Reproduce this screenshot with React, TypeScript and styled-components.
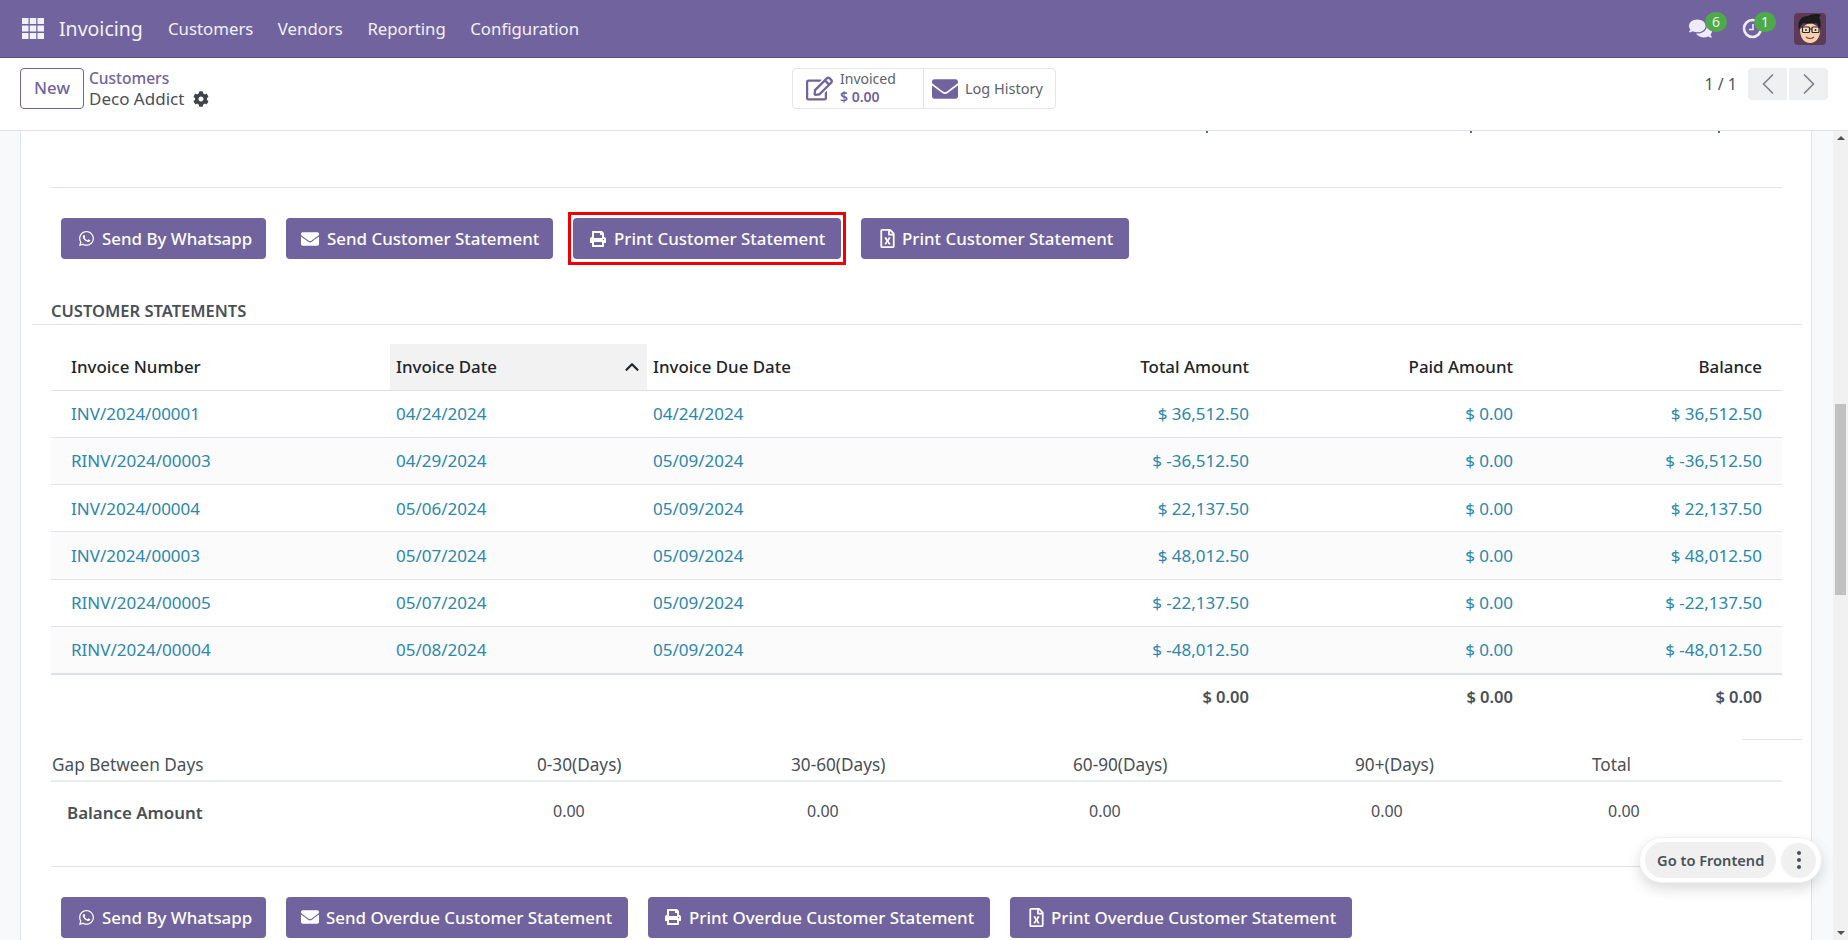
import React from "react";
import styled, { createGlobalStyle } from "styled-components";
import { FaWhatsapp, FaEnvelope, FaPrint, FaRegFileExcel, FaCog, FaRegEdit, FaComments } from "react-icons/fa";
import { FiChevronLeft, FiChevronRight, FiChevronUp } from "react-icons/fi";

const GlobalStyle = createGlobalStyle`
  html, body { margin: 0; padding: 0; height: 100%; overflow: hidden; }
  body { font-family: "Noto Sans", "Open Sans", sans-serif; color: #495057; background: #fff; }
  * { box-sizing: border-box; }
`;

const SPage = styled.div`
  display: flex;
  flex-direction: column;
  height: 940px;
  width: 1848px;
  overflow: hidden;
  position: relative;
`;

const SNav = styled.header`
  display: flex;
  align-items: center;
  height: 58px;
  flex: none;
  background: #71639e;
  border-bottom: 1px solid #5b4f80;
  color: #f3f1f8;
  padding: 0 22px;
`;

const SAppName = styled.span`
  font-size: 19.5px;
  margin: 0 0 0 15px;
  width: 109px;
`;

const SNavLinks = styled.nav`
  display: flex;
  gap: 24.5px;
  font-size: 16.8px;
`;

const SNavRight = styled.div`
  margin-left: auto;
  display: flex;
  align-items: center;
`;

const SNavIcon = styled.div<{ $w: number }>`
  position: relative;
  width: ${(p) => p.$w}px;
  height: 32px;
  display: flex;
  align-items: center;
  color: #efeaf8;
`;

const SBadge = styled.span<{ $left: number }>`
  position: absolute;
  left: ${(p) => p.$left}px;
  top: -1px;
  width: 22px;
  height: 20px;
  border-radius: 10px;
  background: #4fa84a;
  color: #e9f5e6;
  font-size: 14px;
  display: flex;
  align-items: center;
  justify-content: center;
`;

const SControl = styled.div`
  display: flex;
  align-items: flex-start;
  height: 73px;
  flex: none;
  padding: 10px 20px 0 20px;
  border-bottom: 1px solid #e0e0e8;
  position: relative;
`;

const SNewButton = styled.button`
  width: 64px;
  height: 41px;
  background: #fff;
  border: 1px solid #71639e;
  border-radius: 4px;
  color: #71639e;
  font: 500 16.8px "Noto Sans", sans-serif;
  padding: 0 0 2px;
`;

const SCrumbs = styled.div`
  margin-left: 5px;
  width: 283px;
  display: flex;
  flex-direction: column;
`;

const SCrumbLink = styled.span`
  color: #71639e;
  font-size: 15.5px;
  font-weight: 500;
  line-height: 21px;
`;

const SCrumbTitle = styled.span`
  display: flex;
  align-items: center;
  gap: 9px;
  color: #495057;
  font-size: 17px;
  line-height: 22px;
  margin-top: -1px;
`;

const SStatBox = styled.div`
  margin-left: 420px;
  display: flex;
  width: 264px;
  height: 41px;
  border: 1px solid #e4e4ea;
  border-radius: 4px;
`;

const SStat = styled.div<{ $w: number; $divider?: boolean }>`
  display: flex;
  align-items: center;
  width: ${(p) => p.$w}px;
  padding-left: ${(p) => (p.$divider ? 8 : 13)}px;
  gap: 7px;
  color: #71639e;
  border-left: ${(p) => (p.$divider ? "1px solid #e4e4ea" : "none")};
`;

const SStatText = styled.div<{ $large?: boolean }>`
  display: flex;
  flex-direction: column;
  font-size: ${(p) => (p.$large ? 14.5 : 14)}px;
  line-height: 18px;
  margin-top: -1px;
  color: #5d626b;
`;

const SStatValue = styled.span`
  color: #71639e;
  font-weight: 600;
`;

const SPager = styled.div`
  margin-left: auto;
  display: flex;
  align-items: flex-start;
`;

const SPagerText = styled.span`
  font-size: 16px;
  line-height: 24px;
  margin: 4px 11px 0 0;
  color: #50555e;
`;

const SPagerBtn = styled.span<{ $side: "l" | "r" }>`
  width: 39px;
  height: 32px;
  background: #eff0f2;
  display: flex;
  align-items: center;
  justify-content: center;
  color: #7d7f85;
  margin-left: ${(p) => (p.$side === "r" ? 2 : 0)}px;
  border-radius: ${(p) => (p.$side === "l" ? "4px 0 0 4px" : "0 4px 4px 0")};
`;

const SMain = styled.main`
  flex: 1;
  display: flex;
  min-height: 0;
  background: #f8f9fb;
`;

const SGutter = styled.div<{ $w: number }>`
  width: ${(p) => p.$w}px;
  flex: none;
`;

const SSheet = styled.div`
  width: 1792px;
  flex: none;
  background: #fff;
  border-left: 1px solid #e0e0e8;
  border-right: 1px solid #e0e0e8;
  padding: 0 29px 0 30px;
`;

const SCutRow = styled.div`
  position: relative;
  height: 57px;
  border-bottom: 1px solid #e2e2ea;
`;

const SCutDot = styled.span<{ $x: number }>`
  position: absolute;
  left: ${(p) => p.$x}px;
  top: 0;
  width: 2px;
  height: 2px;
  background: #5a6b80;
`;

const SButtons = styled.div<{ $top: number }>`
  display: flex;
  gap: 20px;
  padding-left: 10px;
  margin-top: ${(p) => p.$top}px;
`;

const SActionWrap = styled.div<{ $marked?: boolean }>`
  position: relative;
  &::after {
    content: ${(p) => (p.$marked ? '""' : "none")};
    position: absolute;
    inset: -6px -5px -6px -5px;
    border: 3px solid #f00000;
    pointer-events: none;
  }
`;

const SAction = styled.button<{ $w: number; $pad: number; $gap: number }>`
  display: flex;
  align-items: center;
  width: ${(p) => p.$w}px;
  height: 41px;
  padding: 0 0 0 ${(p) => p.$pad}px;
  gap: ${(p) => p.$gap}px;
  background: #71639e;
  color: #fff;
  border: none;
  border-radius: 4px;
  font: 500 16.9px "Noto Sans", sans-serif;
  white-space: nowrap;
`;

const SSectionTitle = styled.div`
  margin: 42px 0 0 0;
  font-size: 16.5px;
  font-weight: 600;
  color: #495057;
  line-height: 20px;
  height: 23px;
`;

const SSectionLine = styled.div`
  margin: 0 -20px 0 -19px;
  border-top: 1px solid #e2e2ea;
`;

const STable = styled.table`
  width: 1731px;
  table-layout: fixed;
  border-collapse: collapse;
  margin-top: 19px;
  font-size: 17px;
`;

const STh = styled.th<{ $right?: boolean; $sorted?: boolean; $first?: boolean; $last?: boolean }>`
  height: 46px;
  padding: 0 ${(p) => (p.$last ? 20 : 6)}px 0 ${(p) => (p.$first ? 20 : 6)}px;
  text-align: ${(p) => (p.$right ? "right" : "left")};
  font-size: 16.9px;
  font-weight: 500;
  color: #212529;
  background: ${(p) => (p.$sorted ? "#f2f2f2" : "transparent")};
  border-bottom: 1px solid #e0e0e8;
`;

const SSortInner = styled.div`
  display: flex;
  align-items: center;
  justify-content: space-between;
  margin-right: -2px;
`;

const SRow = styled.tr<{ $alt?: boolean }>`
  background: ${(p) => (p.$alt ? "#fbfbfc" : "#fff")};
`;

const STd = styled.td<{ $right?: boolean; $first?: boolean; $last?: boolean }>`
  height: 47.3px;
  padding: 0 ${(p) => (p.$last ? 20 : 6)}px 0 ${(p) => (p.$first ? 20 : 6)}px;
  text-align: ${(p) => (p.$right ? "right" : "left")};
  color: #2b87ab;
  border-bottom: 1px solid #e2e2ea;
`;

const STotal = styled.td<{ $last?: boolean }>`
  height: 45px;
  padding: 0 ${(p) => (p.$last ? 20 : 6)}px 0 6px;
  text-align: right;
  font-size: 16.5px;
  font-weight: 600;
  color: #495057;
  border-top: 2px solid #dde0e5;
`;

const SStubLine = styled.div`
  margin: 20px -20px 0 auto;
  width: 60px;
  border-top: 1px solid #e2e2ea;
`;

const SGapGrid = styled.div`
  display: grid;
  grid-template-columns: 486px 254px 282px 282px 237px 1fr;
  font-size: 17.2px;
`;

const SGapHead = styled(SGapGrid)`
  margin-top: 13px;
  height: 29px;
  align-items: center;
  border-bottom: 2px solid #e9ecef;
  padding-bottom: 4px;
`;

const SGapHeadCell = styled.div<{ $first?: boolean }>`
  padding-left: ${(p) => (p.$first ? 1 : 0)}px;
`;

const SGapRow = styled(SGapGrid)`
  height: 58px;
  padding-top: 16px;
`;

const SGapValue = styled.div`
  padding: 2px 0 0 16px;
  font-size: 16px;
`;

const SGapLabel = styled.div`
  padding: 3px 0 0 16px;
  font-size: 16.9px;
  font-weight: 600;
`;

const SBottomLine = styled.div`
  margin-top: 26px;
  border-top: 1px solid #e0e0ec;
`;

const SScrollbar = styled.div`
  flex: none;
  width: 15px;
  background: #f1f1f1;
  display: flex;
  flex-direction: column;
  align-items: center;
  justify-content: space-between;
  padding: 5px 0;
  position: relative;
`;

const SScrollArrow = styled.span<{ $up?: boolean }>`
  width: 0;
  height: 0;
  border-left: 4px solid transparent;
  border-right: 4px solid transparent;
  border-top: ${(p) => (p.$up ? "none" : "4px solid #505050")};
  border-bottom: ${(p) => (p.$up ? "4px solid #505050" : "none")};
`;

const SScrollThumb = styled.span`
  position: absolute;
  left: 2px;
  right: 2px;
  top: 273px;
  height: 191px;
  background: #c1c1c1;
`;

const SFloat = styled.div`
  position: absolute;
  left: 1639px;
  top: 837px;
  width: 183px;
  height: 46px;
  background: #fff;
  border-radius: 23px;
  border: 1px solid #f0f0f0;
  box-shadow: 0 6px 14px rgba(0, 0, 0, 0.14);
  display: flex;
  align-items: center;
  gap: 5px;
  padding: 0 5px;
`;

const SFloatBtn = styled.span`
  width: 133px;
  height: 36px;
  border-radius: 18px;
  background: #f0f0f0;
  font-size: 14.6px;
  font-weight: 600;
  color: #495057;
  display: flex;
  align-items: center;
  justify-content: center;
`;

const SFloatMore = styled.span`
  width: 35px;
  height: 35px;
  border-radius: 50%;
  background: #f0f0f0;
  display: flex;
  flex-direction: column;
  align-items: center;
  justify-content: center;
  gap: 3px;
`;

const SDot = styled.i`
  width: 4px;
  height: 4px;
  border-radius: 50%;
  background: #495057;
`;

const AppsIcon = () => (
  <svg width="22" height="21" viewBox="0 0 22 21" fill="#f3f1f8">
    {[0, 7.5, 15].map((y) =>
      [0, 7.75, 15.5].map((x) => <rect key={`${x}-${y}`} x={x} y={y} width="6.500" height="6" />)
    )}
  </svg>
);

const ClockIcon = () => (
  <svg width="21" height="21" viewBox="0 0 21 21" fill="none" stroke="#efeaf8">
    <circle cx="10.500" cy="10.500" r="8.500" strokeWidth="2.600" />
    <path d="M11 6v5.500H7" strokeWidth="1.600" />
  </svg>
);

const Avatar = () => (
  <svg width="32" height="32" viewBox="0 0 32 32">
    <rect width="32" height="32" rx="4" fill="#5d3a56" />
    <path d="M6 16c0 9 4 14 10 14s11-6 10-15L16 9z" fill="#f5d0ae" />
    <path d="M5 17C3 8 7 3 14 3c3-2 10-3 13-1-1 1-1 2-2 2 2 3 2 8 1 13-1-3-2-6-4-7-4 1-9 1-13 0-2 2-3 4-4 7z" fill="#1d1a1b" />
    <rect x="8.500" y="14" width="7" height="5.500" rx="1" fill="#f8dfc8" stroke="#2a2626" strokeWidth="1.200" />
    <rect x="18" y="14" width="7" height="5.500" rx="1" fill="#f8dfc8" stroke="#2a2626" strokeWidth="1.200" />
    <path d="M15.500 16H18" stroke="#2a2626" strokeWidth="1" />
    <circle cx="12" cy="17" r="1" fill="#2a2626" />
    <circle cx="21.500" cy="17" r="1" fill="#2a2626" />
    <path d="M12 24c2 2 6 2 8 0" stroke="#8a4a3a" strokeWidth="1.200" fill="none" />
  </svg>
);

const rows = [
  ["INV/2024/00001", "04/24/2024", "04/24/2024", "$ 36,512.50", "$ 0.00", "$ 36,512.50"],
  ["RINV/2024/00003", "04/29/2024", "05/09/2024", "$ -36,512.50", "$ 0.00", "$ -36,512.50"],
  ["INV/2024/00004", "05/06/2024", "05/09/2024", "$ 22,137.50", "$ 0.00", "$ 22,137.50"],
  ["INV/2024/00003", "05/07/2024", "05/09/2024", "$ 48,012.50", "$ 0.00", "$ 48,012.50"],
  ["RINV/2024/00005", "05/07/2024", "05/09/2024", "$ -22,137.50", "$ 0.00", "$ -22,137.50"],
  ["RINV/2024/00004", "05/08/2024", "05/09/2024", "$ -48,012.50", "$ 0.00", "$ -48,012.50"],
];

const colWidths = [339, 257, 303, 305, 264, 263];

const App: React.FC = () => (
  <SPage>
    <GlobalStyle />
    <SNav>
      <AppsIcon />
      <SAppName>Invoicing</SAppName>
      <SNavLinks>
        <span>Customers</span>
        <span>Vendors</span>
        <span>Reporting</span>
        <span>Configuration</span>
      </SNavLinks>
      <SNavRight>
        <SNavIcon $w={53}>
          <FaComments size={23} />
          <SBadge $left={16}>6</SBadge>
        </SNavIcon>
        <SNavIcon $w={52}>
          <ClockIcon />
          <SBadge $left={12}>1</SBadge>
        </SNavIcon>
        <Avatar />
      </SNavRight>
    </SNav>

    <SControl>
      <SNewButton>New</SNewButton>
      <SCrumbs>
        <SCrumbLink>Customers</SCrumbLink>
        <SCrumbTitle>
          Deco Addict <FaCog size={16} color="#3f444c" />
        </SCrumbTitle>
      </SCrumbs>
      <SStatBox>
        <SStat $w={130}>
          <FaRegEdit size={27} />
          <SStatText>
            Invoiced
            <SStatValue>$ 0.00</SStatValue>
          </SStatText>
        </SStat>
        <SStat $w={132} $divider>
          <FaEnvelope size={26} />
          <SStatText $large>Log History</SStatText>
        </SStat>
      </SStatBox>
      <SPager>
        <SPagerText>1 / 1</SPagerText>
        <SPagerBtn $side="l">
          <FiChevronLeft size={36} strokeWidth={1.100} />
        </SPagerBtn>
        <SPagerBtn $side="r">
          <FiChevronRight size={36} strokeWidth={1.100} />
        </SPagerBtn>
      </SPager>
    </SControl>

    <SMain>
      <SGutter $w={20} />
      <SSheet>
        <SCutRow>
          <SCutDot $x={1155} />
          <SCutDot $x={1419} />
          <SCutDot $x={1667} />
        </SCutRow>

        <SButtons $top={30}>
          <SActionWrap>
            <SAction $w={205} $pad={17} $gap={7}>
              <FaWhatsapp size={17} /> Send By Whatsapp
            </SAction>
          </SActionWrap>
          <SActionWrap>
            <SAction $w={267} $pad={15} $gap={8}>
              <FaEnvelope size={18} /> Send Customer Statement
            </SAction>
          </SActionWrap>
          <SActionWrap $marked>
            <SAction $w={268} $pad={17} $gap={8}>
              <FaPrint size={16} /> Print Customer Statement
            </SAction>
          </SActionWrap>
          <SActionWrap>
            <SAction $w={268} $pad={17} $gap={5}>
              <FaRegFileExcel size={19} /> Print Customer Statement
            </SAction>
          </SActionWrap>
        </SButtons>

        <SSectionTitle>CUSTOMER STATEMENTS</SSectionTitle>
        <SSectionLine />

        <STable>
          <colgroup>
            {colWidths.map((w) => (
              <col key={w} width={w} />
            ))}
          </colgroup>
          <thead>
            <tr>
              <STh $first>Invoice Number</STh>
              <STh $sorted>
                <SSortInner>
                  Invoice Date <FiChevronUp size={22} strokeWidth={2.400} />
                </SSortInner>
              </STh>
              <STh>Invoice Due Date</STh>
              <STh $right>Total Amount</STh>
              <STh $right>Paid Amount</STh>
              <STh $right $last>Balance</STh>
            </tr>
          </thead>
          <tbody>
            {rows.map((r, i) => (
              <SRow key={r[0]} $alt={i % 2 === 1}>
                <STd $first>{r[0]}</STd>
                <STd>{r[1]}</STd>
                <STd>{r[2]}</STd>
                <STd $right>{r[3]}</STd>
                <STd $right>{r[4]}</STd>
                <STd $right $last>{r[5]}</STd>
              </SRow>
            ))}
            <tr>
              <STotal />
              <STotal />
              <STotal />
              <STotal>$ 0.00</STotal>
              <STotal>$ 0.00</STotal>
              <STotal $last>$ 0.00</STotal>
            </tr>
          </tbody>
        </STable>

        <SStubLine />

        <SGapHead>
          <SGapHeadCell $first>Gap Between Days</SGapHeadCell>
          <SGapHeadCell>0-30(Days)</SGapHeadCell>
          <SGapHeadCell>30-60(Days)</SGapHeadCell>
          <SGapHeadCell>60-90(Days)</SGapHeadCell>
          <SGapHeadCell>90+(Days)</SGapHeadCell>
          <SGapHeadCell>Total</SGapHeadCell>
        </SGapHead>
        <SGapRow>
          <SGapLabel>Balance Amount</SGapLabel>
          <SGapValue>0.00</SGapValue>
          <SGapValue>0.00</SGapValue>
          <SGapValue>0.00</SGapValue>
          <SGapValue>0.00</SGapValue>
          <SGapValue>0.00</SGapValue>
        </SGapRow>
        <SBottomLine />

        <SButtons $top={30}>
          <SActionWrap>
            <SAction $w={205} $pad={17} $gap={7}>
              <FaWhatsapp size={17} /> Send By Whatsapp
            </SAction>
          </SActionWrap>
          <SActionWrap>
            <SAction $w={342} $pad={15} $gap={7}>
              <FaEnvelope size={18} /> Send Overdue Customer Statement
            </SAction>
          </SActionWrap>
          <SActionWrap>
            <SAction $w={342} $pad={17} $gap={8}>
              <FaPrint size={16} /> Print Overdue Customer Statement
            </SAction>
          </SActionWrap>
          <SActionWrap>
            <SAction $w={342} $pad={17} $gap={5}>
              <FaRegFileExcel size={19} /> Print Overdue Customer Statement
            </SAction>
          </SActionWrap>
        </SButtons>
      </SSheet>
      <SGutter $w={21} />
      <SScrollbar>
        <SScrollArrow $up />
        <SScrollThumb />
        <SScrollArrow />
      </SScrollbar>
    </SMain>

    <SFloat>
      <SFloatBtn>Go to Frontend</SFloatBtn>
      <SFloatMore>
        <SDot />
        <SDot />
        <SDot />
      </SFloatMore>
    </SFloat>
  </SPage>
);

export default App;
